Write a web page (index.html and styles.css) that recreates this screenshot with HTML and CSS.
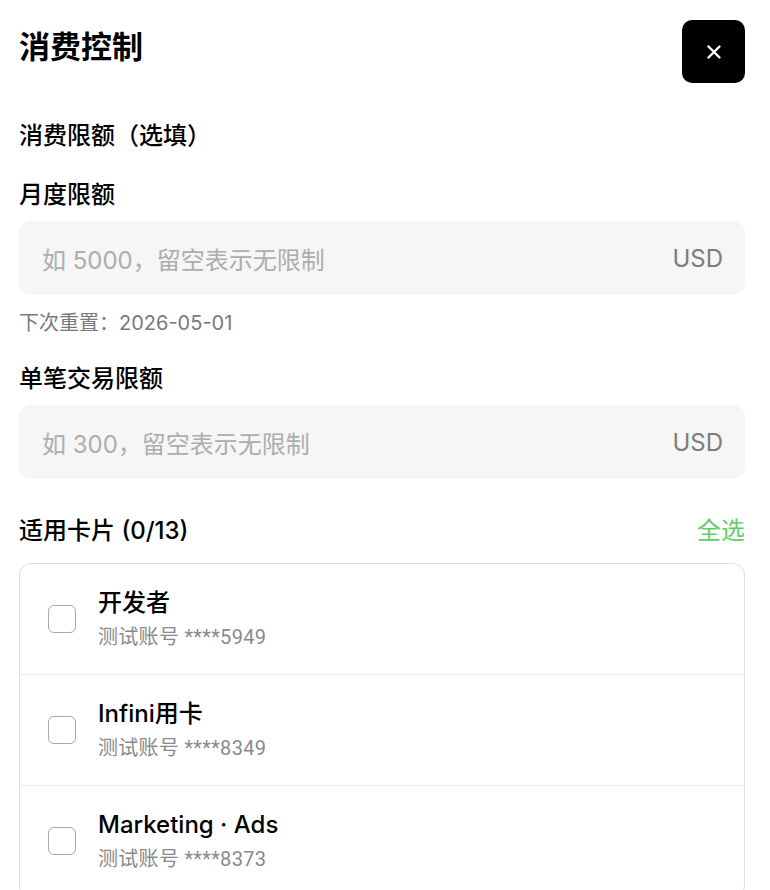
FILE: index.html
```html
<!DOCTYPE html>
<html lang="zh">
<head>
<meta charset="utf-8">
<link rel="stylesheet" href="styles.css">
</head>
<body>
<div class="sheet">
  <div class="header">
    <h1 class="title">消费控制</h1>
    <button class="close" aria-label="关闭">
      <svg width="16" height="16" viewBox="0 0 16 16"><path d="M2.5 2.5L13.5 13.5M13.5 2.5L2.5 13.5" stroke="#fff" stroke-width="2.4" stroke-linecap="round"/></svg>
    </button>
  </div>

  <div class="section-title">消费限额（选填）</div>

  <div class="field-label">月度限额</div>
  <div class="input">
    <span class="placeholder">如 5000，留空表示无限制</span>
    <span class="unit">USD</span>
  </div>
  <div class="hint">下次重置：2026-05-01</div>

  <div class="field-label second">单笔交易限额</div>
  <div class="input">
    <span class="placeholder">如 300，留空表示无限制</span>
    <span class="unit">USD</span>
  </div>

  <div class="cards-head">
    <span class="cards-title">适用卡片 (0/13)</span>
    <span class="select-all">全选</span>
  </div>

  <div class="card-list">
    <div class="card-row">
      <span class="checkbox"></span>
      <div class="card-info">
        <div class="card-name">开发者</div>
        <div class="card-sub">测试账号 ****5949</div>
      </div>
    </div>
    <div class="card-row">
      <span class="checkbox"></span>
      <div class="card-info">
        <div class="card-name">Infini用卡</div>
        <div class="card-sub">测试账号 ****8349</div>
      </div>
    </div>
    <div class="card-row">
      <span class="checkbox"></span>
      <div class="card-info">
        <div class="card-name">Marketing · Ads</div>
        <div class="card-sub">测试账号 ****8373</div>
      </div>
    </div>
  </div>
</div>
</body>
</html>
```

FILE: styles.css
```css
* { box-sizing: border-box; }
html, body { margin: 0; padding: 0; background: #fff; }
body {
  font-family: "Inter", "Noto Sans CJK SC", sans-serif;
  color: #000;
  overflow: hidden;
}
.sheet {
  padding: 20px 25px 0 19px;
}
.header {
  display: flex;
  justify-content: space-between;
  align-items: center;
  height: 63px;
}
.title {
  margin: 0;
  font-size: 31px;
  font-weight: 700;
  line-height: 1;
  margin-top: -10px;
}
.close {
  width: 63px;
  height: 63px;
  border: none;
  border-radius: 10px;
  background: #000;
  display: flex;
  align-items: center;
  justify-content: center;
  padding: 0;
}
.section-title {
  margin-top: 38px;
  font-size: 24px;
  font-weight: 500;
  line-height: 30px;
}
.field-label {
  margin-top: 29px;
  font-size: 24px;
  font-weight: 500;
  line-height: 30px;
}
.field-label.second { margin-top: 28px; }
.input {
  margin-top: 11px;
  height: 74px;
  background: #f6f6f6;
  border-radius: 12px;
  display: flex;
  align-items: center;
  justify-content: space-between;
  padding: 0 22px 0 23px;
  font-size: 24px;
}
.placeholder { color: #adadad; }
.unit { color: #7c7c7c; }
.hint {
  margin-top: 15px;
  font-size: 20px;
  line-height: 26px;
  color: #7a7a7a;
}
.cards-head {
  margin-top: 37px;
  display: flex;
  justify-content: space-between;
  align-items: center;
  line-height: 30px;
}
.cards-title { font-size: 24px; font-weight: 500; }
.select-all { font-size: 24px; color: #5fcd68; }
.card-list {
  margin-top: 17px;
  border: 1.5px solid #dedede;
  border-radius: 12px;
  overflow: hidden;
}
.card-row {
  display: flex;
  align-items: center;
  height: 111px;
  padding-left: 28px;
  border-bottom: 1px solid #ececec;
}
.checkbox {
  width: 28px;
  height: 28px;
  border: 1.5px solid #a8a8a8;
  border-radius: 6px;
  flex: none;
}
.card-info {
  margin-left: 22px;
  display: flex;
  flex-direction: column;
  gap: 6px;
}
.card-name { font-size: 24px; font-weight: 500; line-height: 30px; }
.card-sub {
  font-family: "Roboto", "Noto Sans CJK SC", sans-serif;
  font-size: 20px;
  letter-spacing: 0.3px;
  color: #8a8a8a;
  line-height: 26px;
}
```
